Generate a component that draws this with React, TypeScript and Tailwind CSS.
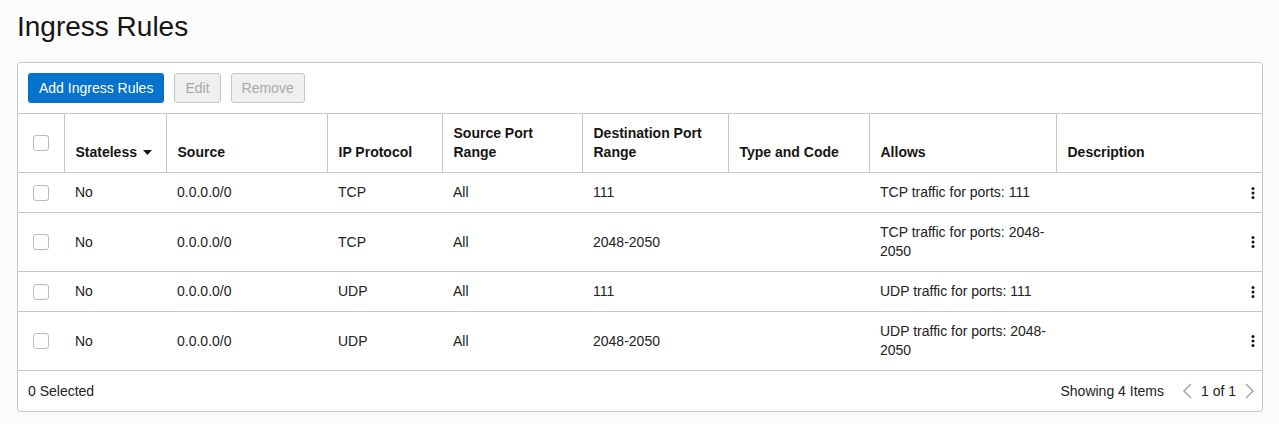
const rows = [
  { source: '0.0.0.0/0', proto: 'TCP', srcPort: 'All', dstPort: '111', allows: 'TCP traffic for ports: 111' },
  { source: '0.0.0.0/0', proto: 'TCP', srcPort: 'All', dstPort: '2048-2050', allows: 'TCP traffic for ports: 2048-2050' },
  { source: '0.0.0.0/0', proto: 'UDP', srcPort: 'All', dstPort: '111', allows: 'UDP traffic for ports: 111' },
  { source: '0.0.0.0/0', proto: 'UDP', srcPort: 'All', dstPort: '2048-2050', allows: 'UDP traffic for ports: 2048-2050' },
];

function Checkbox() {
  return <span className="block w-4 h-4 rounded-[3px] border border-[#b8bcc2] bg-white" />;
}

function Kebab() {
  return (
    <svg width="4" height="14" viewBox="0 0 4 14" className="text-[#161513]">
      <circle cx="2" cy="2.5" r="1.5" fill="currentColor" />
      <circle cx="2" cy="7" r="1.5" fill="currentColor" />
      <circle cx="2" cy="11.5" r="1.5" fill="currentColor" />
    </svg>
  );
}

function Chevron({ dir }: { dir: 'left' | 'right' }) {
  return (
    <svg width="12" height="16" viewBox="0 0 12 16" fill="none" stroke="#a9a9a9" strokeWidth="1.6">
      {dir === 'left' ? <polyline points="10,1 3,8 10,15" /> : <polyline points="2,1 9,8 2,15" />}
    </svg>
  );
}

export default function App() {
  const th = 'border-l border-[#c4c7cc] pl-[11px] pr-3 py-[10px] align-bottom text-left font-bold';
  const td = 'pl-[11px] pr-3 py-[10px] align-middle';

  return (
    <div className="min-h-[424px] bg-[#fbfbfc] pl-[17px] pr-[16px] font-['Liberation_Sans',Arial,sans-serif] text-[14px] leading-[19px] text-[#222]">
      <h1 className="pt-[6px] pb-[14px] text-[28px] leading-[42px] text-[#161513]">Ingress Rules</h1>
      <div className="rounded-[3px] border border-[#c4c7cc] bg-white">
        <div className="flex gap-[10px] border-b border-[#c4c7cc] p-[10px]">
          <button className="h-[30px] rounded-[3px] bg-[#0572ce] px-[11px] text-white">Add Ingress Rules</button>
          <button className="h-[30px] rounded-[3px] border border-[#c4c7cc] bg-[#efefef] px-[10px] text-[#a8a8a8]">Edit</button>
          <button className="h-[30px] rounded-[3px] border border-[#c4c7cc] bg-[#efefef] px-[10px] text-[#a8a8a8]">Remove</button>
        </div>
        <table className="w-full table-fixed border-collapse">
          <colgroup>
            <col className="w-[46px]" />
            <col className="w-[102px]" />
            <col className="w-[161px]" />
            <col className="w-[115px]" />
            <col className="w-[140px]" />
            <col className="w-[146px]" />
            <col className="w-[141px]" />
            <col className="w-[187px]" />
            <col />
          </colgroup>
          <thead>
            <tr className="h-[58px] text-[#161513]">
              <th className="px-[15px] align-middle">
                <Checkbox />
              </th>
              <th className={th}>
                <span className="inline-flex items-center gap-[6px]">
                  Stateless
                  <svg width="9" height="5" viewBox="0 0 9 5">
                    <polygon points="0,0 9,0 4.5,5" fill="#161513" />
                  </svg>
                </span>
              </th>
              <th className={th}>Source</th>
              <th className={th}>IP Protocol</th>
              <th className={th}>Source Port Range</th>
              <th className={th}>Destination Port Range</th>
              <th className={th}>Type and Code</th>
              <th className={th}>Allows</th>
              <th className={th}>Description</th>
            </tr>
          </thead>
          <tbody>
            {rows.map((r, i) => (
              <tr key={i} className="border-t border-[#c4c7cc]">
                <td className="px-[15px] align-middle">
                  <Checkbox />
                </td>
                <td className={td}>No</td>
                <td className={td}>{r.source}</td>
                <td className={td}>{r.proto}</td>
                <td className={td}>{r.srcPort}</td>
                <td className={td}>{r.dstPort}</td>
                <td className={td}></td>
                <td className="pl-[11px] pr-[6px] py-[10px] align-middle">{r.allows}</td>
                <td className="pr-[7px] align-middle">
                  <div className="flex justify-end">
                    <Kebab />
                  </div>
                </td>
              </tr>
            ))}
          </tbody>
        </table>
        <div className="flex h-[41px] items-center justify-between border-t border-[#c4c7cc] pl-[10px] pr-[6px]">
          <span>0 Selected</span>
          <div className="flex items-center">
            <span className="mr-[17px]">Showing 4 Items</span>
            <Chevron dir="left" />
            <span className="mx-[8px]">1 of 1</span>
            <Chevron dir="right" />
          </div>
        </div>
      </div>
    </div>
  );
}
